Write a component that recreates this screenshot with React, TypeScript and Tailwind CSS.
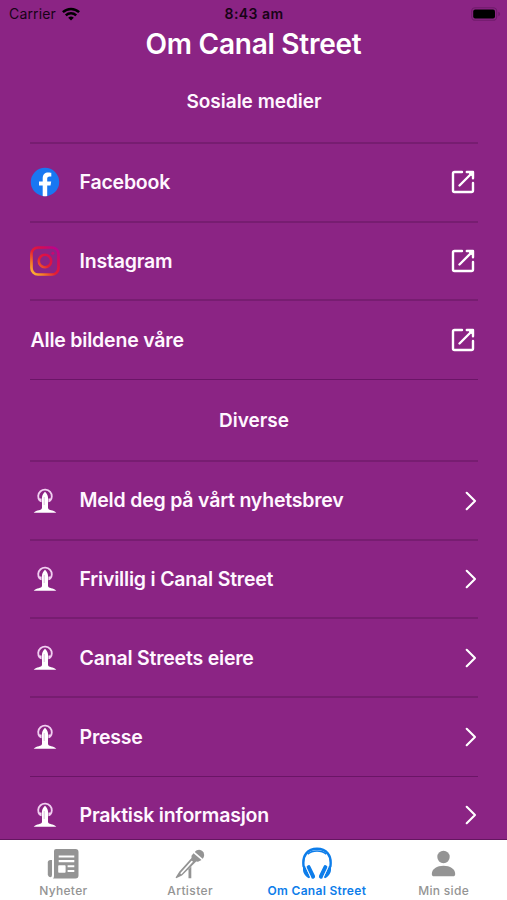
import React from "react";

function Wifi() {
  return (
    <svg width="18" height="14" viewBox="0 0 18 14" fill="none" stroke="#000" strokeWidth="2.5">
      <path d="M.9 5.1C5.5.8 12.5.8 17.1 5.1" />
      <path d="M3.8 8.3C6.8 5.5 11.2 5.5 14.2 8.3" />
      <path d="M9 13.5 6.2 10.7Q9 8.3 11.8 10.7Z" fill="#000" stroke="none" />
    </svg>
  );
}

function Battery() {
  return (
    <svg width="30" height="14" viewBox="0 0 30 14">
      <rect x=".7" y=".7" width="25" height="12.6" rx="3.6" fill="none" stroke="#701b6b" strokeWidth="1.1" />
      <rect x="2.2" y="2.5" width="21.8" height="9" rx="2" fill="#000" />
      <path d="M27.3 4.8q1.8.5 1.8 2.2t-1.8 2.2Z" fill="#701b6b" />
    </svg>
  );
}

function Facebook() {
  return (
    <svg width="30" height="30" viewBox="0 0 30 30">
      <circle cx="15" cy="15" r="14.2" fill="#1877f2" />
      <path d="M12.7 29V18.5H9v-4.1h3.7v-3.1c0-3.8 2.2-5.8 5.6-5.8 1.6 0 3 .3 3 .3v3.6h-1.7c-1.8 0-2.4 1-2.4 2.2v2.8h4l-.7 4.1h-3.3V29a14 14 0 0 1-4.5 0Z" fill="#fff" />
    </svg>
  );
}

function Instagram() {
  return (
    <svg width="30" height="30" viewBox="0 0 30 30" fill="none">
      <defs>
        <linearGradient id="insta" x1="1" y1="29" x2="29" y2="1" gradientUnits="userSpaceOnUse">
          <stop stopColor="#ffc53a" />
          <stop offset=".23" stopColor="#f57a25" />
          <stop offset=".45" stopColor="#e51d32" />
          <stop offset=".68" stopColor="#d80b53" />
          <stop offset="1" stopColor="#b200a0" />
        </linearGradient>
      </defs>
      <rect x="1.5" y="1.5" width="27" height="27" rx="6.5" stroke="url(#insta)" strokeWidth="2.7" />
      <circle cx="15" cy="15" r="6.2" stroke="url(#insta)" strokeWidth="2.6" />
      <circle cx="22.8" cy="7.2" r="1.5" fill="#c80872" />
    </svg>
  );
}

function External() {
  return (
    <svg width="24" height="24" viewBox="0 0 24 24" fill="none" stroke="#fff" strokeWidth="2.4" strokeLinecap="round" strokeLinejoin="round">
      <path d="M11 2H3.5Q2 2 2 3.5v17Q2 22 3.5 22h17q1.5 0 1.5-1.5V13M15.8 2H22v6.2M21.5 2.5 8.5 15.5" />
      <path d="M17.5 2H22v4.5Z" fill="#fff" strokeWidth="1" />
    </svg>
  );
}

function Chevron() {
  return (
    <svg width="12" height="20" viewBox="0 0 12 20" fill="none" stroke="#fff" strokeWidth="2.1" strokeLinecap="round" strokeLinejoin="round">
      <path d="m1.7 1.8 8.3 8.2-8.3 8.2" />
    </svg>
  );
}

function Fountain() {
  return (
    <svg width="24" height="26" viewBox="0 0 24 26">
      <circle cx="12" cy="8.4" r="6.8" fill="none" stroke="#f1cff1" strokeWidth="1.8" strokeDasharray="31 11.7" transform="rotate(139 12 8.4)" />
      <path d="M5.6 10.5h3v3.8l-1.7-.6Zm12.8 0h-3v3.8l1.7-.6Z" fill="#f1cff1" />
      <path d="M12 3.8c-1.7 1.8-3 3.7-3 5.8v10.2c0 1.6-1.6 2-3.2 2.4-1.7.4-3.6.8-5.1 2.5h22.6c-1.5-1.7-3.4-2.1-5.1-2.5-1.6-.4-3.2-.8-3.2-2.4V9.6c0-2.1-1.3-4-3-5.8Z" fill="#fff" />
      <path d="M11.2 9v8" stroke="#cda0cc" strokeWidth=".7" />
    </svg>
  );
}

function Row({ icon, label, external = false, line = "border-b-2 border-[#771d71]" }: {
  icon?: React.ReactNode; label: string; external?: boolean; line?: string;
}) {
  return (
    <li className={`flex h-[78.6px] items-center text-[19.5px] font-semibold tracking-[-0.2px] text-[#fff7ff] ${line}`}>
      {icon && <span className="flex w-[49px] shrink-0"><span className="flex w-[30px] justify-center">{icon}</span></span>}
      <span className="whitespace-nowrap pl-[0.5px] pt-px">{label}</span>
      <span className={external ? "ml-auto mr-[3px]" : "ml-auto mr-px"}>{external ? <External /> : <Chevron />}</span>
    </li>
  );
}

function News() {
  return (
    <svg width="32" height="32" viewBox="0 0 32 32" fill="#949494">
      <path fillRule="evenodd" d="M9 1h19.5q3 0 3 3v23.5q0 3-3 3H6Q7 29.8 7 28V3q0-2 2-2Zm2.7 6.4v2.2h15.6V7.4Zm0 4.7v2.2h15.6v-2.2Zm.3 5.2q-.8 0-.8.8v5.8q0 .8.8.8h5.8q.8 0 .8-.8v-5.8q0-.8-.8-.8Zm8.6 0v1.9h6.7v-1.9Zm0 4.8V24h6.7v-1.9Z" />
      <path d="M3.5 12H5v15q0 2.2-1.6 2.2T.8 27V14.5Q.8 12 3.5 12Z" />
    </svg>
  );
}

function Microphone() {
  return (
    <svg width="30" height="30" viewBox="0 0 30 30" fill="#949494">
      <path d="M19.8 3C22-.2 26.5-.1 28.4 3.3c1.3 2.4.8 4.6-.8 6.5Z" />
      <path d="m18.5 4.2 8 6.8-3.5 1.8-1.8-.2L7 26.5l-5.8 2.8-.6-.8 3.6-5.8L16.5 9V6.8Z" />
      <path d="M16.9 12.6 6.3 24.3" stroke="#fff" strokeWidth="1.7" strokeLinecap="round" />
      <path d="m13.5 20.2 2.8-3v12h-2.8Z" />
    </svg>
  );
}

function Headphones() {
  return (
    <svg width="30" height="33" viewBox="0 0 30 33" fill="none" stroke="#0d7dea">
      <path d="M1.7 20C-.3 8 6.2 1.7 15 1.7S30.3 8 28.3 20" strokeWidth="2.4" />
      <path d="M5.6 7.2c4.8-4.3 14-4.3 18.8 0" strokeWidth="1.6" />
      <path d="M1 18.5v4.3c0 3.8 3.2 7.2 6 8.5l1.1-1L3.2 19.2Zm28 0v4.3c0 3.8-3.2 7.2-6 8.5l-1.1-1 4.9-11.1Z" fill="#0d7dea" stroke="none" />
      <path d="m6.6 20.3 4.4 9.2m12.4-9.2L19 29.5" strokeWidth="4.2" strokeLinecap="round" />
      <path d="m3.8 19.6 5.2 11m17.2-11-5.2 11" stroke="#fff" strokeWidth=".8" />
    </svg>
  );
}

function Person() {
  return (
    <svg width="25" height="27" viewBox="0 0 25 27" fill="#949494">
      <circle cx="12.5" cy="7" r="6.2" />
      <path d="M.8 24c0-5 5.2-8.2 11.7-8.2S24.2 19 24.2 24c0 1.5-.8 2.3-2.2 2.3H3C1.6 26.3.8 25.5.8 24Z" />
    </svg>
  );
}

function Tab({ icon, label, active = false, track }: {
  icon: React.ReactNode; label: string; active?: boolean; track: string;
}) {
  return (
    <button className={`flex flex-1 flex-col items-center ${active ? "text-[#0d7dea]" : "text-[#949494]"}`}>
      <span className="flex h-[43px] items-center pt-1">{icon}</span>
      <span className={`whitespace-nowrap text-[12px] leading-[16px] ${active ? "font-semibold" : "font-medium"} ${track}`}>{label}</span>
    </button>
  );
}

export default function App() {
  return (
    <main className="flex h-[900px] w-[507px] flex-col overflow-hidden bg-[#8b2484] font-['Inter','Liberation_Sans',sans-serif] text-white">
      <header className="shrink-0">
        <div className="grid h-[27px] grid-cols-3 items-center pl-[9px] pr-[6px] text-[14px] text-[#170316]">
          <div className="flex items-center gap-[6px] tracking-[0.15px]"><span>Carrier</span><Wifi /></div>
          <span className="pr-[2px] text-center font-semibold tracking-[0.45px]">8:43 am</span>
          <span className="flex justify-end"><Battery /></span>
        </div>
        <h1 className="pt-[2px] text-center text-[28px] font-semibold leading-[30px] tracking-[-0.25px]">Om Canal Street</h1>
      </header>
      <section className="min-h-0 flex-1 overflow-hidden pl-[30px] pr-[29px]">
        <h2 className="flex h-[85px] items-center justify-center border-b-2 border-[#771d71] pt-[4px] text-[19px] font-semibold text-[#fff7ff]">Sosiale medier</h2>
        <ul>
          <Row icon={<Facebook />} label="Facebook" external />
          <Row icon={<Instagram />} label="Instagram" external />
          <Row label="Alle bildene våre" external line="border-b border-[#6b1567]" />
        </ul>
        <h2 className="flex h-[82.5px] items-center justify-center border-b-2 border-[#771d71] pt-[2px] text-[19px] font-semibold text-[#fff7ff]">Diverse</h2>
        <ul>
          <Row icon={<Fountain />} label="Meld deg på vårt nyhetsbrev" />
          <Row icon={<Fountain />} label="Frivillig i Canal Street" />
          <Row icon={<Fountain />} label="Canal Streets eiere" />
          <Row icon={<Fountain />} label="Presse" line="border-b border-[#6b1567]" />
          <Row icon={<Fountain />} label="Praktisk informasjon" line="pb-[2px]" />
        </ul>
      </section>
      <nav className="flex h-[61px] shrink-0 border-t border-[#641660] bg-white">
        <Tab icon={<News />} label="Nyheter" track="tracking-[0.3px]" />
        <Tab icon={<Microphone />} label="Artister" track="tracking-[0.4px]" />
        <Tab icon={<Headphones />} label="Om Canal Street" active track="tracking-[0.3px]" />
        <Tab icon={<Person />} label="Min side" track="tracking-[0.3px]" />
      </nav>
    </main>
  );
}
